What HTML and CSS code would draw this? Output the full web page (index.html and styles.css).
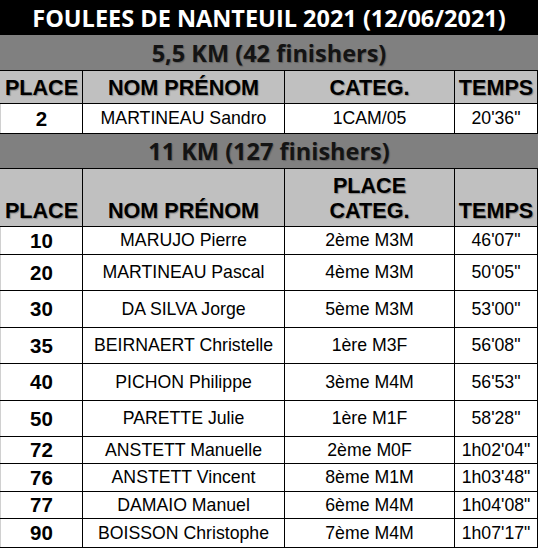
FILE: index.html
```html
<!DOCTYPE html>
<html lang="fr">
<head>
<meta charset="utf-8">
<title>Foulées de Nanteuil 2021</title>
<link rel="stylesheet" href="styles.css">
</head>
<body>
<div class="sheet">
  <div class="title">FOULEES DE NANTEUIL 2021 (12/06/2021)</div>
  <div class="section s1">5,5 KM (42 finishers)</div>
  <div class="row head h1">
    <div class="c">PLACE</div><div class="c">NOM PRÉNOM</div><div class="c">CATEG.</div><div class="c">TEMPS</div>
  </div>
  <div class="row data r30">
    <div class="c place">2</div><div class="c">MARTINEAU Sandro</div><div class="c">1CAM/05</div><div class="c">20'36"</div>
  </div>
  <div class="section s2">11 KM (127 finishers)</div>
  <div class="row head h2">
    <div class="c">PLACE</div><div class="c">NOM PRÉNOM</div><div class="c">PLACE<br>CATEG.</div><div class="c">TEMPS</div>
  </div>
  <div class="row data r28">
    <div class="c place">10</div><div class="c">MARUJO Pierre</div><div class="c">2ème M3M</div><div class="c">46'07"</div>
  </div>
  <div class="row data r36">
    <div class="c place">20</div><div class="c">MARTINEAU Pascal</div><div class="c">4ème M3M</div><div class="c">50'05"</div>
  </div>
  <div class="row data r37">
    <div class="c place">30</div><div class="c">DA SILVA Jorge</div><div class="c">5ème M3M</div><div class="c">53'00"</div>
  </div>
  <div class="row data r36">
    <div class="c place">35</div><div class="c">BEIRNAERT Christelle</div><div class="c">1ère M3F</div><div class="c">56'08"</div>
  </div>
  <div class="row data r37">
    <div class="c place">40</div><div class="c">PICHON Philippe</div><div class="c">3ème M4M</div><div class="c">56'53"</div>
  </div>
  <div class="row data r36">
    <div class="c place">50</div><div class="c">PARETTE Julie</div><div class="c">1ère M1F</div><div class="c">58'28"</div>
  </div>
  <div class="row data r27">
    <div class="c place">72</div><div class="c">ANSTETT Manuelle</div><div class="c">2ème M0F</div><div class="c">1h02'04"</div>
  </div>
  <div class="row data r28">
    <div class="c place">76</div><div class="c">ANSTETT Vincent</div><div class="c">8ème M1M</div><div class="c">1h03'48"</div>
  </div>
  <div class="row data r27">
    <div class="c place">77</div><div class="c">DAMAIO Manuel</div><div class="c">6ème M4M</div><div class="c">1h04'08"</div>
  </div>
  <div class="row data r29">
    <div class="c place">90</div><div class="c">BOISSON Christophe</div><div class="c">7ème M4M</div><div class="c">1h07'17"</div>
  </div>
</div>
</body>
</html>
```

FILE: styles.css
```css
* { box-sizing: border-box; }

body {
  margin: 0;
  background: #ffffff;
  font-family: "Liberation Sans", Arial, sans-serif;
  color: #000;
}

.sheet {
  width: 538px;
}

.title {
  height: 35px;
  background: #000;
  color: #fff;
  font-family: "Open Sans", "Noto Sans", sans-serif;
  font-weight: 700;
  font-size: 23.5px;
  display: flex;
  align-items: center;
  justify-content: center;
  padding-top: 1px;
  white-space: nowrap;
}

.section {
  background: #808080;
  color: #141414;
  font-family: "Open Sans", "Noto Sans", sans-serif;
  font-weight: 700;
  font-size: 23.5px;
  display: flex;
  align-items: center;
  justify-content: center;
  border-bottom: 1px solid #000;
  text-shadow: 1px 1px 1px rgba(0, 0, 0, 0.25);
  white-space: nowrap;
}

.s1 { height: 36px; padding-top: 1px; }
.s2 { height: 35px; padding-top: 0; }

.row {
  display: grid;
  grid-template-columns: 83px 202px 170px 83px;
  border-bottom: 1px solid #000;
}

.c {
  border-right: 1px solid #000;
  display: flex;
  align-items: center;
  justify-content: center;
  text-align: center;
  white-space: nowrap;
}

.c:first-child {
  border-left: 1px solid #d0d0d0;
}

.head {
  background: #c0c0c0;
  font-weight: 700;
  font-size: 21.6px;
  line-height: 25px;
  text-shadow: 1px 1px 1px rgba(0, 0, 0, 0.3);
}

.head .c:first-child { border-left-color: #c0c0c0; }

.h1 { height: 33px; }
.h1 .c { padding-top: 1px; }

.h2 { height: 58px; }
.h2 .c { align-items: flex-end; padding-bottom: 3px; }

.data {
  background: #fff;
  font-size: 17.7px;
}

.place {
  font-weight: 700;
  font-size: 20.5px;
}

.r27 { height: 27px; }
.r28 { height: 28px; }
.r29 { height: 29px; }
.r30 { height: 30px; }
.r36 { height: 36px; }
.r37 { height: 37px; }
```
